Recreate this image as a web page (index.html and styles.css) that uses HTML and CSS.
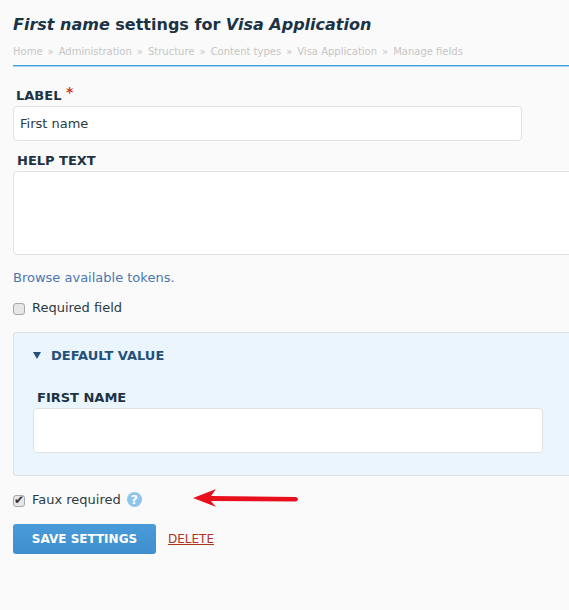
FILE: index.html
```html
<!DOCTYPE html>
<html lang="en">
<head>
	<meta charset="UTF-8">
	<meta name="viewport" content="width=device-width,initial-scale=1.0">
	<title>First name settings</title>
	<link rel="stylesheet" href="styles.css">
</head>
<body>
	<div class="page">
		<h1><em>First name</em> settings for <em>Visa Application</em></h1>
		<div class="breadcrumb">
			<a>Home</a><span>»</span><a>Administration</a><span>»</span><a>Structure</a><span>»</span><a>Content types</a><span>»</span><a>Visa Application</a><span>»</span><a>Manage fields</a>
		</div>
		<form class="settings">
			<div class="field field-label">
				<label for="label">Label <b class="req">*</b></label>
				<input type="text" id="label" class="text-input" value="First name">
			</div>
			<div class="field field-help">
				<label for="help">Help text</label>
				<textarea id="help" class="help-area"></textarea>
			</div>
			<a class="tokens">Browse available tokens.</a>
			<div class="check-row check-required">
				<input type="checkbox" id="required">
				<label for="required">Required field</label>
			</div>
			<div class="default-box">
				<div class="default-title"><i class="caret"></i>Default value</div>
				<div class="field">
					<label for="first">First name</label>
					<input type="text" id="first" class="text-input tall">
				</div>
			</div>
			<div class="check-row check-faux">
				<input type="checkbox" id="faux" checked>
				<label for="faux">Faux required</label>
				<span class="help-icon">?</span>
			</div>
			<div class="actions">
				<button type="button" class="btn">Save settings</button>
				<a class="delete">Delete</a>
			</div>
		</form>
		<!-- annotation drawn on top of the screenshot -->
		<svg class="arrow" width="110" height="24" viewBox="0 0 110 24">
			<path d="M1 12 L24 3 L19 10 L104 11 Q108 13 104 15.5 L19 15 L24 21 Z" fill="#e8101c"/>
		</svg>
	</div>
</body>
</html>
```

FILE: styles.css
```css
html,body{
	margin: 0;
	height: 100%;
	overflow: hidden;
}
body{
	background-color: #fafafa;
	color: #2c3a44;
	font-size: 13px;
	font-family: "DejaVu Sans", sans-serif;
}
.page{
	position: relative;
	height: 610px;
	box-sizing: border-box;
	padding: 15px 0 0 13px;
}
h1{
	margin: 0;
	font-size: 16px;
	line-height: 20px;
	font-weight: bold;
	color: #1b3345;
}
.breadcrumb{
	display: flex;
	margin-top: 10px;
	height: 20px;
	line-height: 14px;
	font-size: 10px;
	color: #c6c6c6;
	border-bottom: 1px solid #3fa2e0;
	box-shadow: 0 1px 0 #a9d6f2;
}
.breadcrumb span{
	margin: 0 5px;
}
.settings{
	display: block;
}
.field label{
	display: block;
	margin-left: 4px;
	font-weight: bold;
	font-size: 13px;
	line-height: 14px;
	text-transform: uppercase;
	color: #1b3345;
}
.field-label{
	padding-top: 22px;
}
.field-help{
	padding-top: 13px;
}
.field-label label{
	margin-left: 3px;
}
.req{
	position: relative;
	top: -3px;
	color: #d0381f;
	font-size: 14px;
}
.text-input{
	display: block;
	box-sizing: border-box;
	width: 509px;
	height: 35px;
	margin-top: 3px;
	padding: 0 6px;
	border: 1px solid #dfe1e3;
	border-radius: 4px;
	background-color: #fff;
	color: #2c3a44;
	font-size: 13px;
	font-family: "DejaVu Sans", sans-serif;
}
.text-input.tall{
	width: 510px;
	height: 45px;
}
.help-area{
	display: block;
	box-sizing: border-box;
	width: 640px;
	height: 84px;
	margin-top: 3px;
	border: 1px solid #dfe1e3;
	border-radius: 4px;
	background-color: #fff;
	resize: none;
}
.tokens{
	display: block;
	margin-top: 15px;
	line-height: 16px;
	color: #4a76b0;
}
.check-row{
	display: flex;
	align-items: center;
	line-height: 16px;
}
.check-row input{
	appearance: none;
	position: relative;
	box-sizing: border-box;
	width: 12px;
	height: 12px;
	margin: 1px 7px 0 0;
	border: 1px solid #a8a8a8;
	border-radius: 3px;
	background-color: #e6e6e6;
}
.check-row input:checked::after{
	content: "✔";
	position: absolute;
	left: 0;
	top: -3px;
	font-size: 12px;
	line-height: 14px;
	color: #333;
}
.check-required{
	margin-top: 14px;
}
.default-box{
	box-sizing: border-box;
	width: 640px;
	height: 144px;
	margin-top: 16px;
	padding: 14px 19px 0;
	border: 1px solid #d9e3ec;
	border-radius: 3px;
	background-color: #eaf5fe;
}
.default-title{
	display: flex;
	align-items: center;
	height: 16px;
	font-weight: bold;
	font-size: 13px;
	text-transform: uppercase;
	color: #25507c;
}
.caret{
	width: 0;
	height: 0;
	margin: 0 10px 0 0;
	border-left: 4.5px solid transparent;
	border-right: 4.5px solid transparent;
	border-top: 7px solid #25507c;
}
.default-box .field{
	margin-top: 28px;
}
.check-faux{
	margin-top: 16px;
}
.help-icon{
	width: 15px;
	height: 15px;
	margin: -2px 0 0 6px;
	border-radius: 50%;
	background-color: #8fc4ec;
	color: #fff;
	font-weight: bold;
	font-size: 13px;
	line-height: 15px;
	text-align: center;
}
.actions{
	display: flex;
	align-items: center;
	margin-top: 16px;
}
.btn{
	width: 143px;
	height: 30px;
	padding: 0;
	border: 0;
	border-radius: 3px;
	background: linear-gradient(#4a9bd9, #3f8fcf);
	color: #fff;
	font-weight: bold;
	font-size: 12px;
	text-transform: uppercase;
	font-family: "DejaVu Sans", sans-serif;
}
.delete{
	margin-left: 12px;
	font-size: 12px;
	color: #b0341c;
	text-decoration: underline;
	text-transform: uppercase;
}
.arrow{
	position: absolute;
	left: 192px;
	top: 486px;
}
```
